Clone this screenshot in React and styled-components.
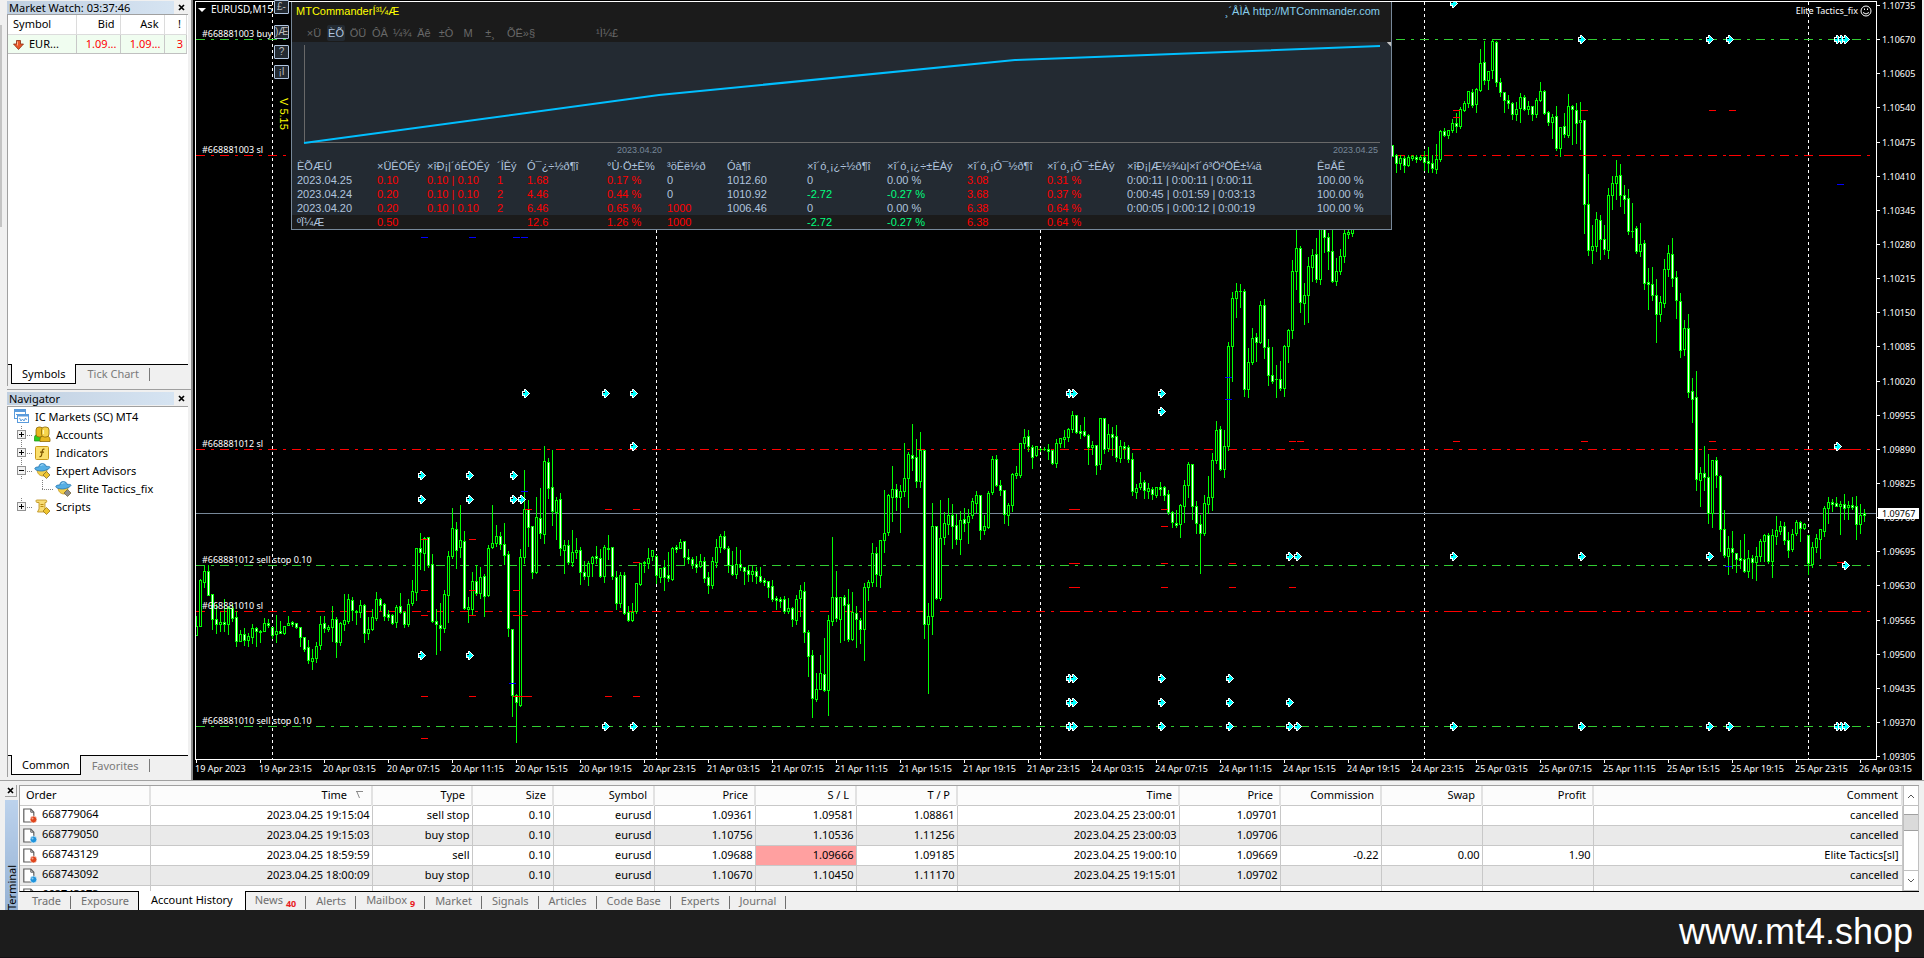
import React from "react";
import styled, { createGlobalStyle } from "styled-components";

const GlobalStyle = createGlobalStyle`
    *{ box-sizing:border-box; }
    body{
        margin:0;
        background:#1c1c1c;
        font-family:"Noto Sans","Open Sans",sans-serif;
        font-size:11px;
        color:#000;
    }
    button{
        font:inherit;
        color:inherit;
        margin:0;
        padding:0;
        border:0;
        background:none;
    }
    table{ border-collapse:collapse; }
`;

const Page = styled.div`
    display:flex;
    flex-direction:column;
    min-height:100vh;
`;

const Workspace = styled.div`
    display:flex;
    background:#f0f0f0;
    padding-right:2px;
`;

/* ---------- left side ---------- */

const Side = styled.aside`
    flex:none;
    width:193px;
    display:flex;
    flex-direction:column;
    padding-left:7px;
    background:linear-gradient(#c4c4c4,#c4c4c4) 0 25px / 2px 202px no-repeat #f0f0f0;
    border-right:2px solid #8a8a8a;
`;

const Pane = styled.section`
    flex:1;
    display:flex;
    flex-direction:column;
    padding:${props => props.$first ? "0 3px 3px 0" : "2px 3px 3px 0"};
    border-bottom:${props => props.$first ? "1px solid #a0a0a0" : "0"};
`;

const PaneTitle = styled.header`
    display:flex;
    justify-content:space-between;
    align-items:center;
    height:14px;
    line-height:13px;
`;

const PaneName = styled.h2`
    flex:1;
    margin:0;
    padding-left:2px;
    font-size:11px;
    font-weight:400;
    height:13px;
    background:linear-gradient(90deg,#c0cfe0,#d6e4f2);
`;

const CloseButton = styled.button`
    width:14px;
    height:12px;
    display:flex;
    align-items:center;
    justify-content:center;
`;

const PaneBox = styled.div`
    flex:1;
    background:#fff;
    border-top:1px solid #a0a0a0;
    border-left:1px solid #a0a0a0;
`;

const PaneTabs = styled.div`
    display:flex;
    height:22px;
    padding-left:3px;
    border-left:1px solid #a0a0a0;
    background:linear-gradient(#000,#000) 0 0 / 100% 1px no-repeat #f0f0f0;
`;

const PaneTab = styled.button`
    height:20px;
    padding:${props => props.$active ? "0 10px" : "0 11px"};
    color:${props => props.$active ? "#000" : "#7a7a7a"};
    background:${props => props.$active ? "#fff" : "transparent"};
    border:${props => props.$active ? "1px solid #000" : "0"};
    border-top:0;
    position:relative;
    &:not(:first-child)::after{
        content:"";
        position:absolute;
        right:0;
        top:4px;
        height:13px;
        border-right:1px solid #7a7a7a;
    }
`;

const WatchTable = styled.table`
    width:179px;
    table-layout:fixed;
    th,td{
        height:19px;
        padding:0 3px 0 4px;
        line-height:16px;
        font-weight:400;
        text-align:right;
        white-space:nowrap;
    }
    th{ border-right:1px solid #dcdcdc; border-bottom:1px solid #dcdcdc; padding-right:5px; }
    td{ border-right:1px solid #c8c8c8; border-bottom:1px solid #c0c0c0; background:#f0fdf0; color:#f00; }
    th:first-child,td:first-child{ text-align:left; color:#000; padding-left:5px; }
    svg{ vertical-align:middle; margin-right:5px; }
`;

const Tree = styled.ul`
    list-style:none;
    margin:0;
    padding:1px 0 0 0;
`;

const TreeRow = styled.li`
    height:18px;
    display:flex;
    align-items:center;
    gap:5px;
    padding-left:${props => props.$indent}px;
    svg{ flex:none; }
`;

const TreeLead = styled.span`
    display:flex;
    align-items:center;
    width:17px;
    height:18px;
    margin-right:-5px;
    background:
        repeating-linear-gradient(180deg,#808080 0 1px,transparent 1px 2px) 4px 0 / 1px ${props => props.$short ? "10px" : "100%"} no-repeat,
        repeating-linear-gradient(90deg,#808080 0 1px,transparent 1px 2px) 4px 9px / 11px 1px no-repeat;
`;

const Expander = styled.button`
    width:9px;
    height:9px;
    display:flex;
    border:1px solid #919191;
    background:#f2f2f2;
`;

/* ---------- chart ---------- */

const ChartArea = styled.main`
    flex:1;
    min-width:0;
    position:relative;
    background:#000;
`;

const ChartSvg = styled.svg`
    display:block;
    width:100%;
    height:auto;
    text{
        font-family:"Noto Sans","Open Sans",sans-serif;
        font-size:9px;
        fill:#fff;
    }
    .title{ font-size:10px; }
    .dark{ fill:#000; }
`;

const ToolStrip = styled.div`
    position:absolute;
    left:81px;
    top:0;
    width:15px;
    display:flex;
    flex-direction:column;
    gap:6px;
`;

const ToolButton = styled.button`
    height:14px;
    overflow:hidden;
    border:1px solid #b0c4de;
    border-radius:1px;
    background:#232a32;
    color:#b8b8b8;
    font-family:"Liberation Sans",Arial,sans-serif;
    font-size:10px;
    line-height:12px;
    white-space:nowrap;
    &:first-child{ margin-bottom:5px; }
`;

const Version = styled.span`
    writing-mode:vertical-rl;
    align-self:flex-end;
    margin-top:13px;
    font-family:"Liberation Sans",Arial,sans-serif;
    font-size:11px;
    line-height:10px;
    color:#ff0;
`;

const Commander = styled.section`
    position:absolute;
    left:98px;
    top:2px;
    width:1101px;
    height:228px;
    display:flex;
    flex-direction:column;
    border:1px solid #778899;
    border-top:0;
    background:#232a32;
    font-family:"Liberation Sans",Arial,sans-serif;
    color:#b0c4de;
`;

const CommanderHead = styled.header`
    height:40px;
    padding:3px 11px 0 4px;
    background:#1b1b1b;
`;

const CommanderTitle = styled.div`
    display:flex;
    justify-content:space-between;
    line-height:13px;
    color:#ff0;
    a{ color:#87ceeb; text-decoration:none; white-space:pre; }
`;

const PeriodTabs = styled.div`
    display:flex;
    gap:4px;
    padding:7px 0 0 9px;
`;

const PeriodTab = styled.button`
    width:${props => props.$wide || 18}px;
    height:16px;
    margin-left:${props => props.$gap || 0}px;
    border-radius:2px;
    background:${props => props.$active ? "#232a32" : "transparent"};
    color:${props => props.$active ? "#b0c4de" : "#696969"};
    white-space:nowrap;
`;

const GrowthSvg = styled.svg`
    display:block;
    width:100%;
    height:117px;
    text{
        font-family:"Liberation Sans",Arial,sans-serif;
        font-size:9px;
        fill:#778899;
    }
`;

const StatsTable = styled.table`
    width:100%;
    table-layout:fixed;
    th,td{
        height:14px;
        padding:0 0 0 5px;
        line-height:14px;
        font-weight:400;
        text-align:left;
        white-space:nowrap;
    }
    tfoot tr{ background:#1b1b1b; }
`;

const Stat = styled.td`
    color:${props => props.$tone === "r" ? "#ff0000" : props.$tone === "g" ? "#00ff7f" : "#b0c4de"};
`;

/* ---------- terminal ---------- */

const Terminal = styled.section`
    display:flex;
    height:130px;
    padding:4px 5px 0 5px;
    background:#f0f0f0;
    border-top:1px solid #a0a0a0;
`;

const TerminalSide = styled.div`
    width:14px;
    display:flex;
    flex-direction:column;
    gap:3px;
`;

const TerminalClose = styled(CloseButton)`
    width:12px;
    border-right:1px solid #a0a0a0;
    border-bottom:1px solid #a0a0a0;
`;

const TerminalName = styled.h2`
    flex:1;
    margin:0;
    width:13px;
    overflow:hidden;
    writing-mode:vertical-rl;
    transform:rotate(180deg);
    font-size:11px;
    line-height:13px;
    font-weight:400;
    background:linear-gradient(0deg,#bcd2ec,#96b2d4);
`;

const TerminalMain = styled.div`
    flex:1;
    min-width:0;
    display:flex;
    flex-direction:column;
`;

const HistoryView = styled.div`
    display:flex;
    height:107px;
    overflow:hidden;
    background:#fff;
    border-top:1px solid #a0a0a0;
    border-left:1px solid #a0a0a0;
    border-bottom:1px solid #000;
`;

const HistoryTable = styled.table`
    flex:1;
    width:100%;
    align-self:flex-start;
    table-layout:fixed;
    th,td{
        height:20px;
        padding:0 2px 0 6px;
        line-height:16px;
        font-weight:400;
        text-align:right;
        white-space:nowrap;
        border-right:1px solid #c8c8c8;
        border-bottom:1px solid #c8c8c8;
    }
    th{ height:19px; padding-right:6px; background:#fcfcfc; border-right:2px solid #e2e2e2; }
    th:first-child,td:first-child{ text-align:left; }
    td:first-child{ padding-left:3px; }
    tbody tr:nth-child(2n) td{ background:#eaeaea; }
    th:last-child,td:last-child{ padding-right:3px; }
    td svg{ vertical-align:middle; margin-right:4px; }
    th svg{ margin-left:8px; margin-right:1px; }
`;

const HistoryCell = styled.td`
    ${props => props.$hit && "background:#ffa0a0;"}
`;

const ScrollRail = styled.div`
    width:16px;
    display:flex;
    flex-direction:column;
    justify-content:space-between;
    background:#fff;
    border:1px solid #c0c0c0;
    border-top:0;
`;

const ScrollArrow = styled.button`
    height:20px;
    display:flex;
    align-items:center;
    justify-content:center;
    border-top:${props => props.$down ? "1px solid #c0c0c0" : "0"};
    border-bottom:${props => props.$down ? "0" : "1px solid #c0c0c0"};
`;

const ScrollThumb = styled.div`
    height:17px;
    margin:8px 0 auto;
    background:#dadada;
    border-top:1px solid #a0a0a0;
    border-bottom:1px solid #a0a0a0;
`;

const TerminalTabs = styled.div`
    display:flex;
    height:18px;
    padding-left:3px;
`;

const TerminalTab = styled.button`
    position:relative;
    padding:${props => props.$active ? "0 12px 2px" : "0 10px 2px"};
    margin-top:${props => props.$active ? "-1px" : "0"};
    color:${props => props.$active ? "#000" : "#6f6f6f"};
    background:${props => props.$active ? "#fff" : "transparent"};
    box-shadow:${props => props.$active ? "-1px 0 0 #000, 1px 0 0 #000" : "none"};
    white-space:nowrap;
    &:not([aria-selected="true"])::after{
        content:"";
        position:absolute;
        right:0;
        top:4px;
        bottom:1px;
        border-right:1px solid #6f6f6f;
    }
    &:has(+ [aria-selected="true"])::after{ display:none; }
`;

const Count = styled.sub`
    margin-left:3px;
    color:#e81c24;
    font-size:9px;
    font-weight:700;
    line-height:9px;
`;

const Footer = styled.footer`
    display:flex;
    justify-content:flex-end;
    align-items:center;
    height:48px;
    padding:0 11px 4px 0;
    background:#1c1c1c;
    border-bottom:1px solid #141014;
    font-family:"Liberation Sans",Arial,sans-serif;
    font-size:36px;
    line-height:40px;
    a{ color:#fff; text-decoration:none; }
`;

/* ---------- data ---------- */

// [high, body top, body bottom, low, falling], one per 15 minutes, 4px apart
const FIRST_BARS = [
    [616,626,635,635,0],[579,580,626,626,0],[565,571,582,587,0],[565,571,595,595,1],[594,594,619,629,1],[604,619,624,633,1],
    [612,622,624,631,0],[599,622,624,631,1],[606,608,624,634,0],[604,608,618,621,1],[611,617,641,646,1],[630,634,641,641,0],
    [628,634,640,645,1],[633,636,640,646,0],[624,628,637,643,0],[627,628,631,646,1],[630,631,632,642,0],[618,623,631,631,0],
    [619,623,625,627,1],[627,627,635,638,1],[615,631,634,642,0],[621,631,633,633,1],[626,626,633,634,0],[616,623,625,625,0],
    [621,622,624,626,1],[623,623,627,628,1],[627,627,637,646,1],[637,637,649,651,1],[640,647,660,663,1],[649,658,661,669,0],
    [642,646,658,662,0],[616,624,645,649,0],[616,623,628,632,1],[625,627,629,631,0],[606,619,627,641,0],[617,619,642,657,1],
    [622,623,642,645,0],[594,620,624,630,0],[594,599,621,623,0],[597,600,610,620,1],[610,611,612,624,0],[600,605,612,617,0],
    [604,605,633,642,1],[617,629,633,639,0],[609,617,629,630,0],[592,599,618,620,0],[598,599,605,610,1],[603,604,616,620,1],
    [610,614,617,620,1],[614,615,623,624,1],[605,607,622,627,0],[593,606,612,613,1],[611,612,624,627,1],[599,604,624,626,0],
    [580,591,603,605,0],[548,548,592,600,0],[533,548,552,569,1],[537,538,553,570,0],[537,537,565,567,1],[554,564,621,622,1],
    [609,621,624,654,1],[603,625,628,650,1],[590,594,628,632,0],[551,556,595,622,0],[508,528,556,558,0],[522,529,550,568,1],
    [505,540,547,557,0],[531,541,608,609,1],[597,607,609,622,0],[572,581,609,615,0],[565,581,593,595,1],[567,577,593,598,0],
    [574,576,596,616,1],[545,548,595,596,0],[505,543,547,548,0],[525,536,543,546,0],[532,536,544,549,1],[523,544,555,564,1],
    [551,554,628,636,1],[629,629,695,716,1],[694,695,702,742,1],[549,557,705,706,0],[470,509,557,563,0],[500,509,527,546,1],
    [526,526,572,578,1],[497,517,572,573,0],[488,518,533,538,1],[446,461,534,543,0],[458,462,488,498,1],[450,487,511,525,1],
    [497,500,512,539,0],[493,499,548,555,1],[540,545,550,573,0],[540,545,562,564,1],[530,552,562,566,0],[538,550,552,558,0],
    [547,550,572,584,1],[561,572,576,579,1],[561,563,576,585,0],[556,557,563,576,0],[546,556,558,563,1],[549,558,576,577,1],
    [545,547,576,582,0],[535,548,549,559,0],[547,547,576,579,1],[571,577,603,609,1],[572,575,603,607,0],[572,575,613,614,1],
    [606,612,620,621,1],[603,612,620,621,0],[583,583,611,613,0],[563,563,584,585,0],[561,562,563,572,0],[548,558,563,568,0],
    [550,550,556,560,0],[555,556,575,583,1],[568,568,577,582,0],[560,567,577,590,1],[552,575,578,581,1],[547,548,579,580,0],
    [545,547,549,552,1],[539,542,548,548,0],[541,541,557,564,1],[549,557,559,563,1],[557,559,564,568,1],[556,564,567,572,1],
    [554,561,566,567,0],[557,561,578,582,1],[572,577,585,593,1],[557,561,585,588,0],[539,547,562,567,0],[534,536,547,552,0],
    [531,536,548,549,1],[546,548,565,572,1],[551,565,574,575,1],[547,564,574,578,0],[550,564,567,570,1],[567,567,571,584,1],
    [566,570,574,581,1],[566,571,574,581,0],[567,571,576,583,1],[567,576,581,582,1],[578,580,582,585,1],[581,581,587,597,1],
    [580,586,599,601,1],[596,598,600,609,1],[597,599,601,607,1],[596,599,611,613,1],[598,608,611,613,0],[607,608,619,626,1],
    [595,599,620,624,0],[585,590,598,616,0],[582,591,632,642,1],[630,632,656,676,1],[650,655,698,717,1],[673,689,699,701,0],
    [655,673,689,689,0],[638,674,690,691,1],[615,620,690,715,0],[537,597,621,625,0],[571,597,618,621,1],[597,597,619,642,0],
    [595,597,605,640,1],[589,604,639,641,1],[592,612,639,640,0],[606,613,619,647,1],[618,620,629,643,1],[583,587,629,660,0],
    [580,582,587,600,0],[543,553,582,586,0],[547,553,574,586,1],[540,540,575,587,0],[490,533,540,552,0],[494,495,532,535,0],
    [466,489,497,521,0],[484,489,497,510,1],[485,491,497,532,0],[443,478,491,496,0],[452,454,478,507,0],[424,455,458,470,1],
    [439,457,481,487,1],[432,450,481,487,0],[450,450,624,638,1],[603,616,624,693,0],[503,526,616,634,0],[526,526,598,599,1],
    [500,538,598,600,0],[512,523,537,544,0],[498,515,524,534,0],[504,515,526,548,1],[514,525,539,544,1],[511,520,539,554,0],
    [508,519,523,531,1],[509,516,522,543,0],[498,501,515,518,0],[491,495,503,512,0],[495,495,530,539,1],[515,526,530,534,0],
    [491,493,527,528,0],[456,459,492,494,0],[455,459,485,486,1],[480,485,490,495,1],[490,490,514,523,1],[503,505,515,525,0],
    [473,474,505,511,0],[466,473,475,478,0],[443,443,475,477,0],[429,437,443,448,0],[430,436,446,451,1],[445,447,457,468,1],
    [446,446,455,456,0],[448,449,449,451,0],[447,449,449,450,0],[444,449,451,459,1],[450,450,463,464,1],[439,443,463,467,0],
    [438,438,443,447,0],[430,437,439,447,0],[428,429,437,441,0],[411,415,429,432,0],[415,415,432,433,1],[425,431,433,438,1],
    [417,431,435,436,1],[434,435,447,464,1],[441,445,447,454,0],[445,445,465,474,1],[418,418,464,469,0],[418,418,449,453,1],
    [424,434,448,451,0],[427,434,437,455,1],[425,436,457,461,1],[440,446,458,462,0],[442,446,448,458,1],[445,447,459,462,1],
    [453,459,491,495,1],[484,488,492,498,0],[472,483,487,489,0],[480,482,490,498,1],[483,488,491,498,0],[487,489,494,499,1],
    [487,487,495,497,0],[482,487,489,495,1],[486,487,495,500,1],[490,494,512,514,1],[511,512,522,527,1],[510,523,525,527,1],
    [504,505,524,537,0],[480,485,506,522,0],[462,464,485,497,0],[464,464,506,519,1],[501,506,523,533,1],[515,524,533,573,1],
    [495,503,533,535,0],[476,497,504,513,0],[453,460,497,510,0],[421,430,460,463,0],[426,429,469,470,1],[430,446,469,477,0],
    [342,346,446,450,0],[292,298,346,381,0],[283,291,298,317,0],[284,291,291,307,0],[289,291,389,396,1],[348,362,389,397,0],
    [328,338,362,364,0],[333,337,342,361,1],[301,305,342,343,0],[299,305,347,358,1],[339,347,375,385,1],[347,375,381,383,1],
    [365,379,379,397,0],[361,379,388,390,1],[345,346,388,396,0],[329,330,346,362,0],[260,271,330,338,0],[225,248,271,289,0],
    [246,248,302,312,1],[283,295,303,324,0],[257,266,295,322,0],[249,255,267,281,0],[238,254,279,282,1],[220,225,279,284,0],
    [220,224,237,252,1],[233,237,251,269,1],[225,251,281,282,1],[258,271,281,285,0],[249,256,271,274,0],[225,233,256,262,0],
    [228,232,234,238,0],[220,225,233,236,0],
];

const LAST_BARS = [
    [145,145,156,156,1],[154,155,163,172,1],[155,158,163,169,0],[156,158,165,172,1],[155,157,165,166,0],[155,156,158,160,0],
    [155,157,159,162,1],[155,157,159,160,0],[151,157,162,170,1],[147,161,163,172,1],[155,163,168,172,1],[144,159,169,173,0],
    [130,131,159,161,0],[128,131,135,136,1],[130,130,135,138,0],[119,123,130,132,0],[113,123,126,132,1],[107,109,126,128,0],
    [101,103,110,111,0],[91,91,103,107,0],[89,92,105,107,1],[88,89,104,112,0],[49,63,90,91,0],[41,62,80,84,1],
    [71,71,80,89,0],[39,41,70,78,0],[41,42,82,86,1],[78,82,92,96,1],[92,92,100,112,1],[95,100,103,108,1],
    [102,103,114,119,1],[102,109,114,120,0],[93,97,108,122,0],[95,97,109,110,1],[101,106,109,114,0],[106,106,114,120,1],
    [98,100,114,117,0],[82,91,100,101,0],[90,91,113,114,1],[111,112,122,125,1],[114,117,122,138,0],[106,116,148,150,1],
    [127,127,148,156,0],[113,126,134,137,1],[94,106,135,137,0],[105,106,109,144,1],[103,110,123,143,1],[102,120,122,149,0],
    [120,120,204,233,1],[174,204,250,255,1],[225,246,250,263,0],[212,219,246,251,0],[215,220,239,259,1],[225,239,249,254,1],
    [188,195,250,258,0],[176,183,195,209,0],[160,176,183,199,0],[164,175,195,206,1],[185,195,199,213,1],[189,198,231,234,1],
    [203,231,231,237,0],[226,228,251,253,1],[223,244,251,256,0],[240,243,283,289,1],[268,282,284,309,1],[267,284,295,300,1],
    [279,295,314,342,1],[296,302,314,321,0],[259,269,303,307,0],[245,253,269,276,0],[238,254,278,286,1],[271,277,300,318,1],
    [293,301,350,357,1],[320,328,349,355,0],[314,328,392,397,1],[378,391,399,422,1],[371,397,479,490,1],[467,473,480,506,0],
    [446,473,477,490,1],[454,477,513,523,1],[460,460,513,527,0],[457,460,475,487,1],[475,476,529,551,1],[510,529,555,557,1],
    [536,548,556,574,0],[531,548,552,568,1],[553,553,559,572,1],[540,558,560,568,1],[534,559,571,572,1],[550,558,571,577,0],
    [555,558,562,578,1],[547,556,562,580,0],[539,541,556,561,0],[534,535,541,561,0],[533,535,561,563,1],[529,535,561,577,0],
    [516,530,536,544,0],[521,526,531,534,0],[522,526,540,544,1],[532,540,550,557,1],[529,534,549,551,0],[520,522,533,535,0],
    [521,522,528,541,1],[523,524,528,529,0],[535,535,563,574,1],[542,547,564,567,0],[534,538,547,552,0],[529,529,539,558,0],
    [506,508,531,536,0],[497,502,508,523,0],[499,502,504,511,1],[497,503,506,506,1],[501,504,506,534,0],[494,504,508,519,1],
    [501,505,507,519,0],[497,505,507,509,1],[496,506,524,539,1],[504,515,524,533,0],[509,513,515,521,1],
];

const PRICES = [
    "1.10735","1.10670","1.10605","1.10540","1.10475","1.10410","1.10345","1.10280","1.10215","1.10150","1.10085","1.10020",
    "1.09955","1.09890","1.09825","1.09760","1.09695","1.09630","1.09565","1.09500","1.09435","1.09370","1.09305",
];

const TIMES = ["19 Apr 2023","19 Apr 23:15"]
    .concat(...["20","21","24","25"].map(day => ["03","07","11","15","19","23"].map(h => `${day} Apr ${h}:15`)))
    .concat("26 Apr 03:15");

const ORDERS = [
    { y:39, color:"#32cd32", text:"#668881003 buy" },
    { y:155, color:"#f00", text:"#668881003 sl" },
    { y:449, color:"#f00", text:"#668881012 sl" },
    { y:565, color:"#32cd32", text:"#668881012 sell stop 0.10" },
    { y:611, color:"#f00", text:"#668881010 sl" },
    { y:726, color:"#32cd32", text:"#668881010 sell stop 0.10" },
];

// pending order arrows, grouped by row
const ARROWS = [
    { y:3, xs:[1450] },
    { y:39, xs:[1578,1706,1726,1834,1838,1842] },
    { y:393, xs:[522,602,630,1066,1070,1158] },
    { y:411, xs:[1158] },
    { y:446, xs:[630,1834] },
    { y:475, xs:[418,466,510] },
    { y:499, xs:[418,466,510,518] },
    { y:556, xs:[1286,1294,1450,1578,1706] },
    { y:565, xs:[1842] },
    { y:655, xs:[418,466] },
    { y:678, xs:[1066,1070,1158,1226] },
    { y:702, xs:[1066,1070,1158,1226,1286] },
    { y:726, xs:[602,630,1066,1070,1158,1226,1286,1294,1450,1578,1706,1726,1834,1838,1842] },
];

const STOPS = [
    { y:110, xs:[1453,1581,1709,1729] },
    { y:117, xs:[1453] },
    { y:155, xs:[1581,1709,1729,1821,1837,1841,1845] },
    { y:441, xs:[1289,1297,1453,1581,1709] },
    { y:449, xs:[1837,1841,1845] },
    { y:509, xs:[525,605,633,1069,1073,1161] },
    { y:526, xs:[1161] },
    { y:539, xs:[421,469] },
    { y:562, xs:[633,1837] },
    { y:563, xs:[1069,1073,1161,1229] },
    { y:587, xs:[1069,1073,1161,1229,1289] },
    { y:590, xs:[421,469,513] },
    { y:611, xs:[1069,1073,1161,1229,1289,1453,1581,1709,1729,1837,1841] },
    { y:615, xs:[421,469,513,521] },
    { y:696, xs:[421,469,513,518,525,605,633] },
    { y:738, xs:[421] },
];

const TAKES = [
    { y:184, xs:[1837] },
    { y:237, xs:[421,469,513,521] },
    { y:377, xs:[1225] },
    { y:399, xs:[1225] },
    { y:491, xs:[521] },
    { y:566, xs:[1725] },
    { y:683, xs:[509] },
];

const PERIODS = [
    { label:"×Ü" },
    { label:"ÈÕ", active:true },
    { label:"ÖÜ" },
    { label:"ÔÂ" },
    { label:"¼¾" },
    { label:"Äê" },
    { label:"±Ò" },
    { label:"M" },
    { label:"±¸" },
    { label:"ÕË»§", wide:36 },
    { label:"¹Ì¼£", wide:36, gap:46 },
];

const STAT_WIDTHS = [80,50,70,30,80,60,60,80,80,80,80,80,190];
const STAT_HEADS = ["ÈÕÆÚ","×ÜÊÖÊý","×îÐ¡|´óÊÖÊý","´ÎÊý","Ó¯¿÷½ð¶î","°Ù·Ö±È%","³öÈë½ð","Óà¶î","×î´ó¸¡¿÷½ð¶î","×î´ó¸¡¿÷±ÈÀý","×î´ó¸¡Ó¯½ð¶î","×î´ó¸¡Ó¯±ÈÀý","×îÐ¡|Æ½¾ù|×î´ó³Ö²ÖÊ±¼ä","Ê¤ÂÊ"];
// tones: one letter per cell, r = red, g = green
const STAT_ROWS = [
    { tones:"-rrrrr----rr--", cells:["2023.04.25","0.10","0.10 | 0.10","1","1.68","0.17 %","0","1012.60","0","0.00 %","3.08","0.31 %","0:00:11 | 0:00:11 | 0:00:11","100.00 %"] },
    { tones:"-rrrrr--ggrr--", cells:["2023.04.24","0.20","0.10 | 0.10","2","4.46","0.44 %","0","1010.92","-2.72","-0.27 %","3.68","0.37 %","0:00:45 | 0:01:59 | 0:03:13","100.00 %"] },
    { tones:"-rrrrrr---rr--", cells:["2023.04.20","0.20","0.10 | 0.10","2","6.46","0.65 %","1000","1006.46","0","0.00 %","6.38","0.64 %","0:00:05 | 0:00:12 | 0:00:19","100.00 %"] },
];
const STAT_TOTAL = { tones:"-rrrrrr-ggrr--", cells:["ºÏ¼Æ","0.50","","","12.6","1.26 %","1000","","-2.72","-0.27 %","6.38","0.64 %","",""] };

const HISTORY_WIDTHS = [130,222,100,81,101,101,101,101,222,101,101,101,111];
const HISTORY_HEADS = ["Order","Time","Type","Size","Symbol","Price","S / L","T / P","Time","Price","Commission","Swap","Profit","Comment"];
const HISTORY = [
    { side:"sell", cells:["668779064","2023.04.25 19:15:04","sell stop","0.10","eurusd","1.09361","1.09581","1.08861","2023.04.25 23:00:01","1.09701","","","","cancelled"] },
    { side:"buy", cells:["668779050","2023.04.25 19:15:03","buy stop","0.10","eurusd","1.10756","1.10536","1.11256","2023.04.25 23:00:03","1.09706","","","","cancelled"] },
    { side:"sell", hit:6, cells:["668743129","2023.04.25 18:59:59","sell","0.10","eurusd","1.09688","1.09666","1.09185","2023.04.25 19:00:10","1.09669","-0.22","0.00","1.90","Elite Tactics[sl]"] },
    { side:"buy", cells:["668743092","2023.04.25 18:00:09","buy stop","0.10","eurusd","1.10670","1.10450","1.11170","2023.04.25 19:15:01","1.09702","","","","cancelled"] },
    { side:"sell", cells:["668743073","2023.04.25 18:00:08","sell stop","0.10","eurusd","1.09361","1.09581","1.08861","2023.04.25 23:00:00","1.09702","","","","cancelled"] },
];

const TERMINAL_TABS = [
    { label:"Trade" },
    { label:"Exposure" },
    { label:"Account History", active:true },
    { label:"News", count:40 },
    { label:"Alerts" },
    { label:"Mailbox", count:9 },
    { label:"Market" },
    { label:"Signals" },
    { label:"Articles" },
    { label:"Code Base" },
    { label:"Experts" },
    { label:"Journal" },
];

/* ---------- icons ---------- */

const CrossIcon = () => (
    <svg width="7" height="7" viewBox="0 0 7 7">
        <path d="M1 1L6 6M6 1L1 6" stroke="#000" strokeWidth="1.7"/>
    </svg>
);

const DownIcon = () => (
    <svg width="11" height="10" viewBox="0 0 11 10">
        <path d="M3.5 .5h4v3.500h3L5.500 9.500.5 4h3z" fill="#e8582a" stroke="#8c2c10" strokeWidth=".8"/>
        <path d="M4.500 1.500v4" stroke="#ffb08a"/>
    </svg>
);

const BrokerIcon = () => (
    <svg width="16" height="15" viewBox="0 0 16 15">
        <rect x=".5" y=".5" width="11" height="9" fill="#fff" stroke="#5a9bdc"/>
        <path d="M1 2h10" stroke="#5a9bdc" strokeWidth="2"/>
        <path d="M2 6l1-1 1 1" fill="none" stroke="#5a9bdc"/>
        <rect x="3.500" y="5.500" width="11" height="8" fill="#fff" stroke="#5a9bdc"/>
        <path d="M4 6.500h10" stroke="#5a9bdc" strokeWidth="2"/>
        <path d="M5.500 9l1.500 3 1.500-2 1.500 2L11.500 9l1 2" fill="none" stroke="#5a9bdc"/>
    </svg>
);

const AccountsIcon = () => (
    <svg width="17" height="17" viewBox="0 0 17 17">
        <path d="M.5 15c-1-6 2-7 4-7s4 3 3 7z" fill="#2ecc1e" stroke="#168a10" strokeWidth=".7"/>
        <rect x="2" y="1" width="7" height="10" rx="3" fill="#e8b820" stroke="#8f6a08" strokeWidth=".8"/>
        <path d="M6 15.500c-.5-4 1.500-6 5-6s5.500 2 5 6z" fill="#e8b820" stroke="#8f6a08" strokeWidth=".8"/>
        <rect x="7.500" y="1" width="7.500" height="10" rx="3" fill="#f6d44a" stroke="#8f6a08" strokeWidth=".8"/>
        <path d="M9.500 4v4" stroke="#fff3b0" strokeWidth="1.200"/>
    </svg>
);

const IndicatorIcon = () => (
    <svg width="17" height="16" viewBox="-1 -1 17 16">
        <rect x=".5" y=".5" width="13" height="13" rx="1" fill="#fbdf6c" stroke="#c99a1c"/>
        <path d="M9.500 3.200c-2-.6-2.200 1-2.500 3.300S6.500 11 4.500 10.600M5 6.200h4" fill="none" stroke="#7a5200" strokeWidth="1.200"/>
    </svg>
);

const ExpertIcon = ({ badge }) => (
    <svg width="17" height="16" viewBox="0 0 17 16">
        <path d="M3 6c0 5 3 7 6 7s4-3 4-7z" fill="#f3cf4b" stroke="#b98b14" strokeWidth=".7"/>
        <path d="M.8 5.500C1 4 4 4 5 3.800 5 1 7 .6 8.500.6S12 1.500 12 3.400c1.500 0 4-.2 4 .8 0 1.500-5 3.800-8.500 3.800S.8 7 .8 5.500z" fill="#55aee4" stroke="#2674ad" strokeWidth=".8"/>
        <path d="M6.500 3c.5-1.200 2-1.500 3-1" fill="none" stroke="#b8e2fa"/>
        <path d="M12.500 8.500L16 12l-3.500 3.500L9 12z" fill={badge} stroke="#6b5a2a" strokeWidth=".7"/>
    </svg>
);

const ScriptIcon = () => (
    <svg width="17" height="16" viewBox="-1 0 17 16">
        <path d="M1.500 1h9.500c1 0 1 2.500 0 2.500h-1V10l1 3H2.500L4 10V3.500H2C.8 3.500.8 1 1.500 1z" fill="#f8dc74" stroke="#b98b14" strokeWidth=".8"/>
        <path d="M5.500 5.500h3M5.500 7.500h3" stroke="#b98b14"/>
        <path d="M11.500 8.500L15 12l-3.500 3.500L8 12z" fill="#efc42e" stroke="#8f6a08" strokeWidth=".7"/>
    </svg>
);

const OrderIcon = ({ side }) => (
    <svg width="15" height="16" viewBox="0 0 15 16">
        <path d="M.8 1h7l3 3.200V14H.8z" fill="#fff" stroke="#5c5c5c" strokeWidth="1.200"/>
        <path d="M7.800 1v3.200h3" fill="none" stroke="#5c5c5c"/>
        <circle cx="10.500" cy="11.500" r="3.400" fill={side === "sell" ? "#e0461c" : "#1f94dc"} stroke="#fff" strokeWidth=".6"/>
        <circle cx="9.500" cy="10.500" r="1" fill="#fff" opacity=".5"/>
    </svg>
);

/* ---------- parts ---------- */

const bodies = (bars, start, falling) => bars.map(([, top, bottom, , down], i) =>
    Boolean(down) === falling && bottom - top > 1 ? `M${start + i * 4} ${top + 1}h1V${bottom}h-1z` : ""
).join("");

const outline = (bars, start) => bars.map(([high, top, bottom, low], i) => {
    const x = start + i * 4;
    return `M${x} ${high}h1V${low + 1}h-1zM${x - 1} ${top}h3V${bottom + 1}h-3z`;
}).join("");

const Bars = ({ bars, start }) => (
    <g shapeRendering="crispEdges">
        <path d={outline(bars, start)} fill="#0f0"/>
        <path d={bodies(bars, start, false)} fill="#000"/>
        <path d={bodies(bars, start, true)} fill="#fff"/>
    </g>
);

const Marks = ({ rows, color }) => (
    <path shapeRendering="crispEdges" fill={color}
        d={rows.map(({ y, xs }) => xs.map(x => `M${x} ${y}h7v1h-7z`).join("")).join("")}/>
);

const Arrow = ({ x, y }) => (
    <g transform={`translate(${x} ${y})`} shapeRendering="crispEdges">
        <path d="M0-2h2v-2h2v1h1v1h1v1h1v1h1v1h-1v1h-1v1h-1v1h-1v1h-2v-2h-2z" fill="#fff"/>
        <path d="M1-1h2v1h-2z" fill="#000"/>
        <path d="M1 0h2v-3h1v1h1v1h1v1h1v1h-1v1h-1v1h-1v1h-1v-2h-2z" fill="#0ff"/>
    </g>
);

const PriceChart = () => (
    <ChartSvg viewBox="193 0 1729 780" role="img" aria-label="EURUSD M15 chart">
        <g shapeRendering="crispEdges">
            {[272,656,1040,1424,1808].map(x =>
                <path key={x} d={`M${x}.5 2V759`} stroke="#fff" strokeDasharray="3 3"/>
            )}
            <path d="M196 513.500H1876" stroke="#778899"/>
            {ORDERS.map(({ y, color }) =>
                <path key={y} d={`M196 ${y}.5H1870`} stroke={color} strokeDasharray="9 6 3 6"/>
            )}
        </g>
        <Bars bars={FIRST_BARS} start={196}/>
        <Bars bars={LAST_BARS} start={1392}/>
        <Marks rows={STOPS} color="#f00"/>
        <Marks rows={TAKES} color="#00f"/>
        {ARROWS.map(({ y, xs }) => xs.map(x => <Arrow key={`${x}-${y}`} x={x} y={y}/>))}
        <rect x="196" y="0" width="1680" height="1" fill="#000"/>
        {ORDERS.map(({ y, text }) => <text key={y} x="202" y={y - 2}>{text}</text>)}
        <path d="M195.500 760V1.500H1876.500V759.500H196" fill="none" stroke="#fff" shapeRendering="crispEdges"/>
        <path d="M198 8h8l-4 4z" fill="#fff"/>
        <text className="title" x="211" y="13">EURUSD,M15</text>
        <text x="1858" y="14" textAnchor="end">Elite Tactics_fix</text>
        <g fill="none" stroke="#fff">
            <circle cx="1866" cy="11" r="5"/>
            <path d="M1863 12.500q3 3 6 0M1864.500 8.500v1.500M1867.500 8.500v1.500"/>
        </g>
        {PRICES.map((price, i) => {
            const y = Math.round(5 + i * 34.14);
            return (
                <g key={price}>
                    <path d={`M1877 ${y}.5h3`} stroke="#fff" shapeRendering="crispEdges"/>
                    <text x="1882" y={y + 4}>{price}</text>
                </g>
            );
        })}
        <rect x="1878" y="508" width="41" height="11" fill="#fff"/>
        <text className="dark" x="1882" y="517">1.09767</text>
        {TIMES.map((time, i) =>
            <g key={time}>
                <path d={`M${196 + i * 64}.5 760v3`} stroke="#fff" shapeRendering="crispEdges"/>
                <text x={195 + i * 64} y="772">{time}</text>
            </g>
        )}
    </ChartSvg>
);

const StatRow = ({ row }) => (
    <tr>
        {row.cells.map((cell, i) => <Stat key={i} $tone={row.tones[i]}>{cell}</Stat>)}
    </tr>
);

const CommanderPanel = () => (
    <Commander>
        <CommanderHead>
            <CommanderTitle>
                <span>MTCommanderÍ³¼Æ</span>
                <a href="http://MTCommander.com">¸´ÅÌÀ http://MTCommander.com</a>
            </CommanderTitle>
            <PeriodTabs>
                {PERIODS.map(({ label, active, wide, gap }) =>
                    <PeriodTab key={label} $active={active} $wide={wide} $gap={gap}>{label}</PeriodTab>
                )}
            </PeriodTabs>
        </CommanderHead>
        <GrowthSvg viewBox="292 42 1099 117" preserveAspectRatio="none">
            <path d="M304.500 45V142.500H1380" fill="none" stroke="#696969"/>
            <path d="M304 143L659 95 1015 60 1380 46" fill="none" stroke="#00bfff" strokeWidth="2"/>
            <path d="M1391 38.500v8l-4-4z" fill="#c0c0c0"/>
            <text x="617" y="153">2023.04.20</text>
            <text x="1378" y="153" textAnchor="end">2023.04.25</text>
        </GrowthSvg>
        <StatsTable>
            <colgroup>
                {STAT_WIDTHS.map((width, i) => <col key={i} width={width}/>)}
                <col/>
            </colgroup>
            <thead>
                <tr>{STAT_HEADS.map(head => <th key={head}>{head}</th>)}</tr>
            </thead>
            <tbody>
                {STAT_ROWS.map(row => <StatRow key={row.cells[0]} row={row}/>)}
            </tbody>
            <tfoot>
                <StatRow row={STAT_TOTAL}/>
            </tfoot>
        </StatsTable>
    </Commander>
);

const TreeNode = ({ icon, label, open, last }) => (
    <TreeRow $indent={9}>
        <TreeLead $short={last}>
            <Expander aria-label={`Toggle ${label}`}>
                <svg width="7" height="7" viewBox="0 0 7 7" shapeRendering="crispEdges">
                    <path d={open ? "M1 3.500h5" : "M1 3.500h5M3.500 1v5"} stroke="#000"/>
                </svg>
            </Expander>
        </TreeLead>
        {icon}
        <span>{label}</span>
    </TreeRow>
);

const MarketWatch = () => (
    <Pane $first>
        <PaneTitle>
            <PaneName>Market Watch: 03:37:46</PaneName>
            <CloseButton aria-label="Close Market Watch"><CrossIcon/></CloseButton>
        </PaneTitle>
        <PaneBox>
            <WatchTable>
                <colgroup><col width="68"/><col width="44"/><col width="44"/><col/></colgroup>
                <thead>
                    <tr><th>Symbol</th><th>Bid</th><th>Ask</th><th>!</th></tr>
                </thead>
                <tbody>
                    <tr><td><DownIcon/>EUR...</td><td>1.09...</td><td>1.09...</td><td>3</td></tr>
                </tbody>
            </WatchTable>
        </PaneBox>
        <PaneTabs role="tablist">
            <PaneTab role="tab" aria-selected="true" $active>Symbols</PaneTab>
            <PaneTab role="tab" aria-selected="false">Tick Chart</PaneTab>
        </PaneTabs>
    </Pane>
);

const Navigator = () => (
    <Pane>
        <PaneTitle>
            <PaneName>Navigator</PaneName>
            <CloseButton aria-label="Close Navigator"><CrossIcon/></CloseButton>
        </PaneTitle>
        <PaneBox>
            <Tree>
                <TreeRow $indent={6}><BrokerIcon/><span>IC Markets (SC) MT4</span></TreeRow>
                <TreeNode icon={<AccountsIcon/>} label="Accounts"/>
                <TreeNode icon={<IndicatorIcon/>} label="Indicators"/>
                <TreeNode icon={<ExpertIcon badge="#efc42e"/>} label="Expert Advisors" open/>
                <TreeRow $indent={30}>
                    <TreeLead $short/>
                    <ExpertIcon badge="#8c8c8c"/>
                    <span>Elite Tactics_fix</span>
                </TreeRow>
                <TreeNode icon={<ScriptIcon/>} label="Scripts" last/>
            </Tree>
        </PaneBox>
        <PaneTabs role="tablist">
            <PaneTab role="tab" aria-selected="true" $active>Common</PaneTab>
            <PaneTab role="tab" aria-selected="false">Favorites</PaneTab>
        </PaneTabs>
    </Pane>
);

const TerminalPanel = () => (
    <Terminal>
        <TerminalSide>
            <TerminalClose aria-label="Close Terminal"><CrossIcon/></TerminalClose>
            <TerminalName>Terminal</TerminalName>
        </TerminalSide>
        <TerminalMain>
            <HistoryView>
                <HistoryTable>
                    <colgroup>
                        {HISTORY_WIDTHS.map((width, i) => <col key={i} width={width}/>)}
                        <col/>
                    </colgroup>
                    <thead>
                        <tr>
                            {HISTORY_HEADS.map((head, i) =>
                                <th key={i}>
                                    {head}
                                    {i === 1 &&
                                        <svg width="9" height="9" viewBox="0 0 9 9">
                                            <path d="M1 1.500h7M2 2l2.500 6" fill="none" stroke="#8a8a8a"/>
                                        </svg>}
                                </th>
                            )}
                        </tr>
                    </thead>
                    <tbody>
                        {HISTORY.map(({ side, hit, cells }) =>
                            <tr key={cells[0]}>
                                {cells.map((cell, i) =>
                                    <HistoryCell key={i} $hit={hit === i}>
                                        {i === 0 && <OrderIcon side={side}/>}
                                        {cell}
                                    </HistoryCell>
                                )}
                            </tr>
                        )}
                    </tbody>
                </HistoryTable>
                <ScrollRail>
                    <ScrollArrow aria-label="Scroll up">
                        <svg width="8" height="6" viewBox="0 0 8 6"><path d="M1 5l3-3 3 3" fill="none" stroke="#555"/></svg>
                    </ScrollArrow>
                    <ScrollThumb/>
                    <ScrollArrow $down aria-label="Scroll down">
                        <svg width="8" height="6" viewBox="0 0 8 6"><path d="M1 1l3 3 3-3" fill="none" stroke="#555"/></svg>
                    </ScrollArrow>
                </ScrollRail>
            </HistoryView>
            <TerminalTabs role="tablist">
                {TERMINAL_TABS.map(({ label, active, count }) =>
                    <TerminalTab key={label} role="tab" aria-selected={Boolean(active)} $active={active}>
                        {label}{count && <Count>{count}</Count>}
                    </TerminalTab>
                )}
            </TerminalTabs>
        </TerminalMain>
    </Terminal>
);

const App = () => (
    <Page>
        <GlobalStyle/>
        <Workspace>
            <Side>
                <MarketWatch/>
                <Navigator/>
            </Side>
            <ChartArea>
                <PriceChart/>
                <ToolStrip>
                    <ToolButton>£-</ToolButton>
                    <ToolButton>)Æ</ToolButton>
                    <ToolButton>?</ToolButton>
                    <ToolButton>¡I</ToolButton>
                    <Version>V 5.15</Version>
                </ToolStrip>
                <CommanderPanel/>
            </ChartArea>
        </Workspace>
        <TerminalPanel/>
        <Footer><a href="http://www.mt4.shop">www.mt4.shop</a></Footer>
    </Page>
);

export default App;
